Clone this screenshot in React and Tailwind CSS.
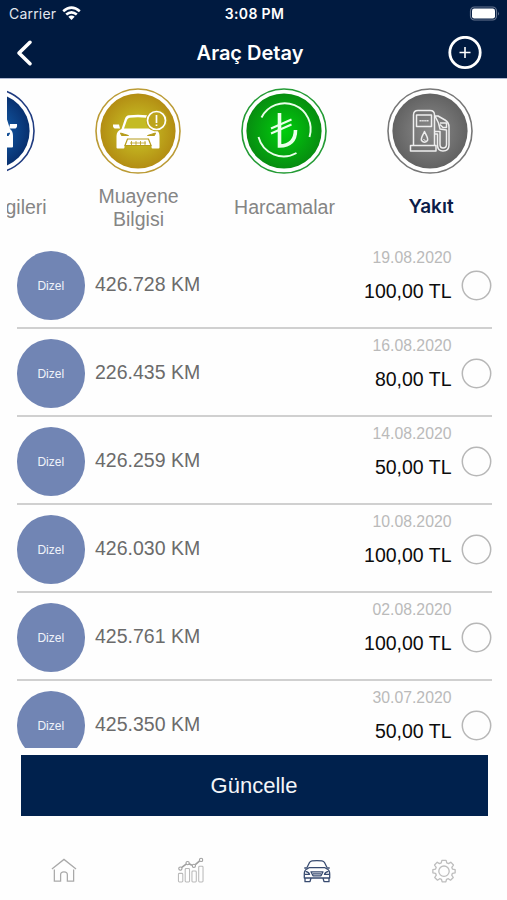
import React from "react";

const rows = [
  { km: "426.728 KM", date: "19.08.2020", amount: "100,00 TL" },
  { km: "226.435 KM", date: "16.08.2020", amount: "80,00 TL" },
  { km: "426.259 KM", date: "14.08.2020", amount: "50,00 TL" },
  { km: "426.030 KM", date: "10.08.2020", amount: "100,00 TL" },
  { km: "425.761 KM", date: "02.08.2020", amount: "100,00 TL" },
  { km: "425.350 KM", date: "30.07.2020", amount: "50,00 TL" },
];

function Medal({ id, from, to, ring, children }) {
  return (
    <svg className="block h-[86px] w-[86px] shrink-0" viewBox="0 0 86 86" fill="none">
      <defs>
        <radialGradient id={id}>
          <stop offset="0" stopColor={from} />
          <stop offset="1" stopColor={to} />
        </radialGradient>
      </defs>
      <circle cx="43" cy="43" r="42" stroke={ring} strokeWidth="1.6" fill="#fff" />
      <circle cx="43" cy="43" r="37.6" fill={`url(#${id})`} />
      {children}
    </svg>
  );
}

function CarFront() {
  return (
    <g>
      <path
        d="M22 41 L26 30 Q27.500 27.200 31 27 Q43 26 52.500 27 Q56 27.200 57.500 30 L61 41 Q64 43 64 48 V58.500 Q64 59.500 63 59.500 H57 Q56 59.500 56 58.300 V56.500 H30 V58.300 Q30 59.500 29 59.500 H22.500 Q21.500 59.500 21.500 58.500 V48 Q21.500 43 22 41Z"
        fill="#fff"
      />
      <path d="M60.500 45 L54 47.500 H59.500Z" fill="#0d4a92" stroke="#0d4a92" />
      <path d="M68 36 H61 L60 40.500 H66.500 Q68.500 39.500 68 36Z" fill="#fff" />
    </g>
  );
}

function Header() {
  return (
    <header className="flex h-[79px] shrink-0 flex-col border-b border-[#aeb8d2] bg-[#001a40] text-white">
      <div className="grid h-[27px] grid-cols-3 items-center pl-[9px] pr-[7px] font-['Inter','Liberation_Sans',sans-serif] text-[13.5px]">
        <div className="flex items-center gap-[6px] text-[#e3e7ee]">
          <span className="tracking-[0.2px] text-[14px]">Carrier</span>
          <svg className="-mt-px h-[14px] w-[19px]" viewBox="0 0 19 14" fill="none" stroke="#fff" strokeWidth="2.600">
            <path d="M1.200 5.200 Q9.500 -2 17.800 5.200" />
            <path d="M4.200 8.600 Q9.500 4 14.800 8.600" />
            <path d="M9.500 13.900 L6.300 10.700 Q9.500 8.200 12.700 10.700Z" fill="#fff" stroke="none" />
          </svg>
        </div>
        <div className="text-center text-[14px] font-semibold tracking-[0.35px] whitespace-nowrap">3:08 PM</div>
        <div className="flex justify-end">
          <svg className="h-[15px] w-[31px]" viewBox="0 0 31 15" fill="none">
            <rect x="1.500" y="1" width="26" height="13" rx="4" stroke="#66758f" strokeWidth="1.200" />
            <rect x="3" y="2.600" width="23" height="9.800" rx="2.200" fill="#fff" />
            <path d="M29 5.500 Q30.800 7.500 29 9.500Z" fill="#66758f" />
          </svg>
        </div>
      </div>
      <div className="flex h-[51px] items-center justify-between pl-[16px] pr-[25px]">
        <svg className="h-[28px] w-[34px]" viewBox="0 0 34 28" fill="none" stroke="#fff" strokeWidth="3.600">
          <path d="M14 3.300 L3 14 L14 24.700" strokeLinejoin="round" strokeLinecap="round" />
        </svg>
        <h1 className="ml-[2px] font-['Inter','Liberation_Sans',sans-serif] text-[20px] font-semibold">Araç Detay</h1>
        <svg className="h-[34px] w-[34px]" viewBox="0 0 34 34" fill="none" stroke="#fff">
          <circle cx="17" cy="16.500" r="15.200" strokeWidth="2.800" />
          <path d="M17 11 V22 M11.500 16.500 H22.500" strokeWidth="1.600" />
        </svg>
      </div>
    </header>
  );
}

function Category({ label, children, active }) {
  return (
    <div className="flex w-[146px] shrink-0 flex-col items-center">
      {children}
      <div
        className={
          active
            ? "ml-[2px] flex h-[68px] items-center text-center font-['Inter','Liberation_Sans',sans-serif] text-[19px] font-semibold text-[#0c1c48]"
            : "ml-[1px] flex h-[68px] items-center text-center text-[19.5px] leading-[23px] whitespace-pre text-[#858585]"
        }
      >
        {label}
      </div>
    </div>
  );
}

function Categories() {
  return (
    <div className="ml-[7px] flex h-[162px] shrink-0 overflow-hidden pt-[9px]">
      <div className="-ml-[88px] flex">
        <Category label="Araç Bilgileri">
          <Medal id="blue" from="#1668b8" to="#08306f" ring="#203c80">
            <CarFront />
          </Medal>
        </Category>
        <Category label={"Muayene\nBilgisi"}>
          <Medal id="gold" from="#cccb28" to="#b38d13" ring="#bb9b35">
            <path d="M26.500 41 L30 30.500 Q31 27.500 34 27.300 Q43 26.300 52 27.300 L56 31 L60 41 Q64.500 43 64.500 48 V59.500 Q64.500 60.500 63.500 60.500 H57.500 Q56.500 60.500 56.500 59.300 V57.500 H29.500 V59.300 Q29.500 60.500 28.500 60.500 H22.500 Q21.500 60.500 21.500 59.500 V48 Q21.500 43 26.500 41Z" fill="#fff" />
            <path d="M18 36.500 H24 L25 40.500 H19.500 Q17.500 39.500 18 36.500Z" fill="#fff" />
            <path d="M29 40.500 L32 32 Q32.700 30 34.700 29.800 Q43 28.800 51 29.800 L57 40.500Z" fill="#c4bb23" />
            <path d="M25.500 45 L33.500 47.500 H26.500Z M60.500 45 L52.500 47.500 H59.500Z" fill="#b69c1b" stroke="#b69c1b" />
            <path d="M32.500 51 H53.500 L56 57.500 H30Z" fill="#fff" stroke="#b69c1b" strokeWidth="1.200" />
            <path d="M35 55 H51 M36.500 53 V57 M41 53 V57 M45.500 53 V57 M50 53 V57" stroke="#b69c1b" strokeWidth="0.800" />
            <circle cx="61.500" cy="32.500" r="10.800" fill="#bda51d" />
            <circle cx="61.500" cy="32.500" r="9" stroke="#fff" strokeWidth="1.700" />
            <path d="M61.500 27 V35 M61.500 36.500 V38" stroke="#fff" strokeWidth="1.700" />
          </Medal>
        </Category>
        <Category label="Harcamalar">
          <Medal id="green" from="#00ce0c" to="#078d10" ring="#249b35">
            <path d="M20.500 29.500 A26 26 0 0 1 68.500 49" stroke="#eaffea" strokeWidth="1.900" />
            <path d="M17.500 49 A26 26 0 0 0 55.500 65" stroke="#eaffea" strokeWidth="1.900" />
            <path d="M38.500 25 V58 Q54.500 57.500 54.500 42" stroke="#eaffea" strokeWidth="3.600" />
            <path d="M30 40.500 L50.500 31.500 M30 45.500 L50.500 36.500" stroke="#eaffea" strokeWidth="2" />
          </Medal>
        </Category>
        <Category label="Yakıt" active>
          <Medal id="gray" from="#8b8b8b" to="#626262" ring="#777777">
            <g stroke="#eeeeee" strokeWidth="1.500" strokeLinejoin="round">
              <path d="M26.500 57.500 V27 Q26.500 22.500 31 22.500 H43 Q47.500 22.500 47.500 27 V57.500" />
              <rect x="23.500" y="57.500" width="25.500" height="5.500" />
              <rect x="29.500" y="27" width="15" height="11.500" />
              <path d="M32.500 32.800 H42" strokeDasharray="1.400 0.500" />
              <path d="M37.500 43.500 C36 47 33.500 50 34.500 52.500 Q37.500 56 40.500 52.500 C41.500 50 39 47 37.500 43.500Z" />
              <path d="M36.500 51 Q37 52.500 38.500 52.500" strokeWidth="1" />
              <path d="M47.500 28 H51 L58 32 Q62 34.500 62 39 V57 Q62 63 56 63 Q50.500 63 50.500 57 V46 H47.500" />
              <path d="M47.500 43.500 H53 V56.500 Q53 60 56 60 Q59.500 60 59.500 56.500 V42 L53 41 L51.500 35 L48 28" />
              <path d="M53 35 H59.500 V39.500 H56 L53 36.500" />
            </g>
          </Medal>
        </Category>
      </div>
    </div>
  );
}

function Row({ km, date, amount }) {
  return (
    <li className="flex h-[88px] shrink-0 border-b-2 border-[#d0d0d0]">
      <div className="mt-[10px] flex h-[69px] w-[68.500px] shrink-0 items-center justify-center rounded-full bg-[#7185b4] text-[12px] text-[#f0f3fa]">
        Dizel
      </div>
      <div className="ml-[10px] mt-[31px] flex-1 text-[19.5px] leading-[24px] text-[#6b6b6b]">{km}</div>
      <div className="flex flex-col items-end">
        <span className="mt-[7px] text-[15.8px] leading-[20px] text-[#bababa]">{date}</span>
        <span className="mt-[11px] text-[19.5px] leading-[24px] text-[#0c0c0c]">{amount}</span>
      </div>
      <svg className="ml-[9px] mt-[29px] h-[31px] w-[31px] shrink-0" viewBox="0 0 31 31" fill="none">
        <circle cx="15.500" cy="15.500" r="14.200" stroke="#b7b7b7" strokeWidth="1.500" />
      </svg>
    </li>
  );
}

function TabBar() {
  return (
    <nav className="grid h-[58px] grid-cols-4 items-center justify-items-center">
      <svg className="h-[27px] w-[27px]" viewBox="0 0 28 28" fill="none" stroke="#a9a9a9" strokeWidth="1.300">
        <path d="M2 12.500 L14.500 2.500 L27 12.500" />
        <path d="M4.500 13 V25 H11 V18.500 Q11 15.500 14.500 15.500 Q18 15.500 18 18.500 V25 H24.500 V13" />
      </svg>
      <svg className="h-[27px] w-[27px]" viewBox="0 0 28 28" fill="none" stroke="#bababa" strokeWidth="1.100">
        <rect x="1.500" y="17" width="4.500" height="9" rx="1" />
        <rect x="8.500" y="12" width="4.500" height="14" rx="1" />
        <rect x="15.500" y="14.500" width="4.500" height="11.500" rx="1" />
        <rect x="22.500" y="9.500" width="4.500" height="16.500" rx="1" />
        <g stroke="#a0a0a0">
          <path d="M5 10.800 L9.500 7.300 M12.500 7 L15.500 8.500 M19 8 L23.500 4" strokeWidth="1.700" />
          <circle cx="3.500" cy="12" r="1.700" />
          <circle cx="11" cy="6.300" r="1.700" />
          <circle cx="17.500" cy="9.200" r="1.700" />
          <circle cx="25" cy="3" r="1.700" />
        </g>
      </svg>
      <svg className="h-[28px] w-[28px]" viewBox="0 0 28 28" fill="none" stroke="#384b70" strokeWidth="1.300" strokeLinejoin="round">
        <path d="M3.500 11.500 L6.500 5.500 Q7.300 4 9 3.800 Q14 3.300 19 3.800 Q20.700 4 21.500 5.500 L24.500 11.500" />
        <path d="M4 12 L6 10.700 H22 L24 12 Q26.700 13 26.700 17 V21 H1.300 V17 Q1.300 13 4 12Z" />
        <path d="M1.300 11 H3.500 M24.500 11 H26.700" />
        <path d="M2.500 14.300 Q6 15 6.500 17.300 H2 M25.500 14.300 Q22 15 21.500 17.300 H26" />
        <path d="M8 14.800 H20 L18 18.800 H10Z M10 16.800 H18" />
        <path d="M2 21 V24.700 H7 L8 21 M26 21 V24.700 H21 L20 21" />
      </svg>
      <svg className="h-[26px] w-[26px]" viewBox="0 0 28 28" fill="none" stroke="#bdbdbd" strokeWidth="1.400" strokeLinejoin="round">
        <path d="M11.700 2.500 H16.300 L17 5.300 L18.900 6.100 L21.300 4.500 L24.200 7.600 L22.400 10 L23.100 12 L26 12.500 V16 L23.100 16.500 L22.300 18.500 L24 21 L21 23.900 L18.700 22.300 L16.700 23 L16 25.800 H12 L11.300 23 L9.300 22.300 L7 23.900 L4 21 L5.700 18.500 L4.900 16.500 L2 16 V12.500 L4.900 12 L5.600 10 L3.800 7.600 L6.700 4.500 L9.100 6.100 L11 5.300Z" />
        <circle cx="14" cy="14.200" r="5.600" />
      </svg>
    </nav>
  );
}

export default function App() {
  return (
    <div className="flex h-[900px] w-[507px] flex-col overflow-hidden bg-[#fefefe] font-['Liberation_Sans',Arial,sans-serif]">
      <Header />
      <Categories />
      <ul className="flex h-[507px] shrink-0 flex-col overflow-hidden pl-[16.500px] pr-[15.500px]">
        {rows.map((row) => (
          <Row key={row.date} {...row} />
        ))}
      </ul>
      <div className="pb-[26px] pl-[20.500px] pr-[19.500px] pt-[7px]">
        <button className="flex h-[60.500px] w-full items-center justify-center bg-[#00214d] text-[22px] text-[#f3f5f8]">
          Güncelle
        </button>
      </div>
      <TabBar />
    </div>
  );
}
